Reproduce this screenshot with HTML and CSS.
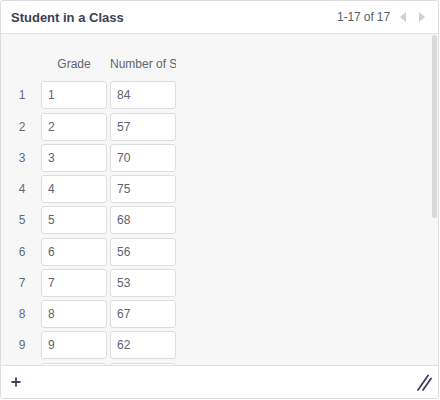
FILE: index.html
```html
<!DOCTYPE html>
<html>
<head>
<meta charset="utf-8">
<link rel="stylesheet" href="styles.css">
</head>
<body>
<div class="panel">
  <div class="header">
    <div class="title">Student in a Class</div>
    <div class="pager">
      <span class="count">1-17 of 17</span>
      <svg class="arrow" width="6" height="10" viewBox="0 0 6 10"><path d="M6 0 L0 5 L6 10 Z" fill="#cfcfd2"/></svg>
      <svg class="arrow" width="6" height="10" viewBox="0 0 6 10"><path d="M0 0 L6 5 L0 10 Z" fill="#cfcfd2"/></svg>
    </div>
  </div>
  <div class="body">
    <div class="grid">
      <div class="hnum"></div>
      <div class="hcell">Grade</div>
      <div class="hcell">Number of Students</div>

      <div class="num">1</div><div class="cell">1</div><div class="cell">84</div>
      <div class="num">2</div><div class="cell">2</div><div class="cell">57</div>
      <div class="num">3</div><div class="cell">3</div><div class="cell">70</div>
      <div class="num">4</div><div class="cell">4</div><div class="cell">75</div>
      <div class="num">5</div><div class="cell">5</div><div class="cell">68</div>
      <div class="num">6</div><div class="cell">6</div><div class="cell">56</div>
      <div class="num">7</div><div class="cell">7</div><div class="cell">53</div>
      <div class="num">8</div><div class="cell">8</div><div class="cell">67</div>
      <div class="num">9</div><div class="cell">9</div><div class="cell">62</div>
      <div class="num">10</div><div class="cell">10</div><div class="cell">60</div>
    </div>
    <div class="scroll-thumb"></div>
  </div>
  <div class="footer">
    <svg class="plus" width="10" height="10" viewBox="0 0 10 10"><path d="M5 0.5 V9.5 M0.5 5 H9.5" stroke="#3d4357" stroke-width="1.8"/></svg>
    <svg class="resize" width="15" height="17" viewBox="0 0 15 17"><path d="M1 16 L11 1.5 M6 16 L14 4.5" stroke="#3d4357" stroke-width="1.8" stroke-linecap="round"/></svg>
  </div>
</div>
</body>
</html>
```
FILE: styles.css
```css
html, body {
  margin: 0;
  padding: 0;
  background: #ffffff;
}
body {
  font-family: "Liberation Sans", Arial, sans-serif;
}
.panel {
  width: 439px;
  height: 399px;
  box-sizing: border-box;
  border: 1px solid #dddddf;
  border-radius: 3px;
  display: flex;
  flex-direction: column;
  overflow: hidden;
  background: #fff;
}
.header {
  height: 32px;
  border-bottom: 1px solid #e2e2e4;
  display: flex;
  align-items: center;
  justify-content: space-between;
  padding: 0 13px 0 10px;
  flex: none;
}
.title {
  font-size: 13px;
  font-weight: bold;
  color: #3b4155;
}
.pager {
  display: flex;
  align-items: center;
}
.count {
  font-size: 12px;
  color: #5a5e68;
  margin-right: 10px;
  letter-spacing: -0.1px;
}
.arrow {
  display: block;
}
.arrow + .arrow {
  margin-left: 13px;
}
.body {
  height: 331px;
  flex: none;
  background: #f7f7f7;
  position: relative;
  overflow: hidden;
  padding: 16px 0 0 5px;
  box-sizing: border-box;
}
.grid {
  display: grid;
  grid-template-columns: 32px 66px 66px;
  grid-auto-rows: 28px;
  column-gap: 3px;
  row-gap: 3.25px;
}
.hnum, .hcell {
  height: 28px;
}
.hcell {
  font-size: 12px;
  color: #62656e;
  line-height: 28px;
  text-align: center;
  white-space: nowrap;
  overflow: hidden;
  margin-bottom: -1.25px;
}
.num {
  font-size: 12px;
  color: #686b74;
  line-height: 28px;
  text-align: center;
}
.cell {
  background: #fff;
  border: 1px solid #dedee0;
  border-radius: 3px;
  box-sizing: border-box;
  font-size: 12px;
  color: #5e6271;
  line-height: 26px;
  padding-left: 6px;
}
.scroll-thumb {
  position: absolute;
  right: 1px;
  top: 1px;
  width: 5px;
  height: 183px;
  border-radius: 3px;
  background: #d9d9db;
}
.footer {
  flex: 1;
  border-top: 1px solid #e2e2e4;
  display: flex;
  align-items: center;
  justify-content: space-between;
  padding: 0 6px 0 10px;
}
.plus, .resize {
  display: block;
}
```
